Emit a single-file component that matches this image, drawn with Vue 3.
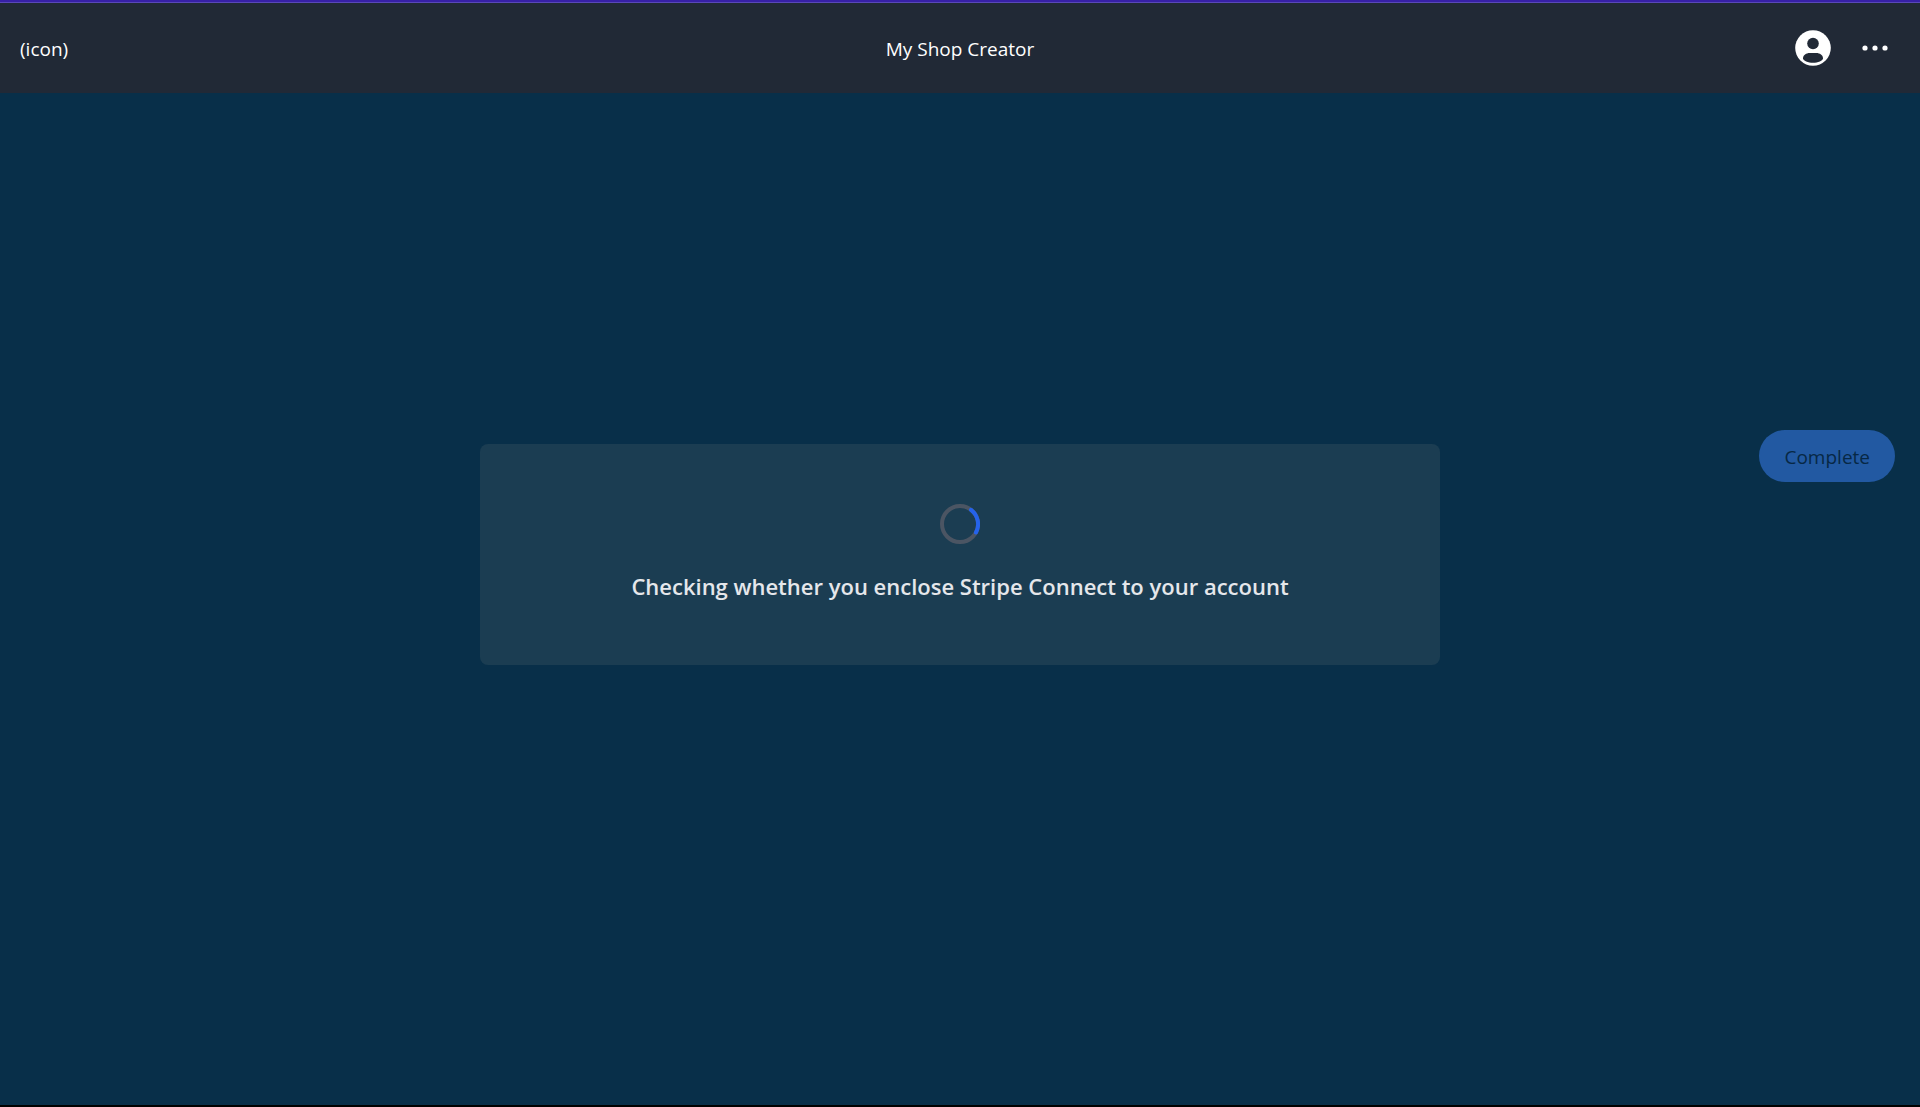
<script setup>
import { ref } from 'vue'

const title = ref('My Shop Creator')
const status = ref('Checking whether you enclose Stripe Connect to your account')
</script>

<template>
  <div class="page">
    <header class="topbar">
      <span class="brand">(icon)</span>
      <span class="title">{{ title }}</span>
      <nav class="actions">
        <button class="icon-button" type="button" aria-label="Account">
          <svg width="36" height="36" viewBox="0 0 36 36">
            <circle cx="18" cy="18" r="17.8" fill="#fff" />
            <circle cx="18" cy="13.5" r="5.8" fill="#212936" />
            <path
              d="M8 28.2C8 25 11.3 22.9 14.6 22.9h6.8c3.3 0 6.6 2.1 6.6 5.3 0 2.6-5.2 4.6-10 4.6S8 30.8 8 28.2z"
              fill="#212936"
            />
          </svg>
        </button>
        <button class="icon-button" type="button" aria-label="More options">
          <svg width="36" height="36" viewBox="0 0 36 36" fill="#fff">
            <circle cx="8" cy="18" r="2.6" />
            <circle cx="18" cy="18" r="2.6" />
            <circle cx="28" cy="18" r="2.6" />
          </svg>
        </button>
      </nav>
    </header>

    <main class="content">
      <section class="card" role="status">
        <svg class="spinner" width="40" height="40" viewBox="0 0 40 40" fill="none" stroke-width="4">
          <circle cx="20" cy="20" r="18" stroke="#4b5563" />
          <path d="M31 5.8A18 18 0 0 1 36 28.5" stroke="#2563eb" stroke-linecap="round" />
        </svg>
        <h1 class="message">{{ status }}</h1>
      </section>
      <button class="complete" type="button" disabled>Complete</button>
    </main>
  </div>
</template>

<style>
body {
  margin: 0;
  background: #000;
}
</style>

<style scoped>
.page {
  box-sizing: border-box;
  display: flex;
  flex-direction: column;
  min-height: 100vh;
  border-top: 2px solid #3720a6;
  border-bottom: 2px solid #000;
  background: #082f49;
  color: #fff;
  font-family: "Segoe UI", "Open Sans", "Noto Sans", sans-serif;
  font-size: 19px;
  line-height: 28px;
}

.topbar {
  display: grid;
  grid-template-columns: 1fr auto 1fr;
  align-items: center;
  box-sizing: border-box;
  height: 91px;
  padding: 0 20px;
  border-top: 1px solid #5a48b8;
  background: #212936;
}

.brand,
.title {
  padding-top: 2px;
}

.actions {
  display: flex;
  justify-content: flex-end;
  gap: 26px;
  padding-right: 7px;
}

.icon-button {
  display: block;
  padding: 0;
  border: 0;
  background: none;
}

.icon-button svg {
  display: block;
}

.content {
  flex: 1;
  display: grid;
  grid-template-columns: 1fr 2fr 1fr;
  align-content: center;
  align-items: start;
  padding-bottom: 90px;
}

.card {
  grid-column: 2;
  display: flex;
  flex-direction: column;
  align-items: center;
  gap: 26px;
  padding: 60px 20px 63px;
  border-radius: 8px;
  background: #1b3d52;
}

.message {
  margin: 0;
  color: #e5e7eb;
  font-size: 22px;
  font-weight: 600;
  line-height: 32px;
  text-align: center;
}

.complete {
  grid-column: 3;
  justify-self: end;
  height: 52px;
  margin: -14px 25px 0 0;
  padding: 2px 25px 0;
  border: 0;
  border-radius: 26px;
  background: #2259a2;
  color: #072845;
  font: inherit;
}
</style>
